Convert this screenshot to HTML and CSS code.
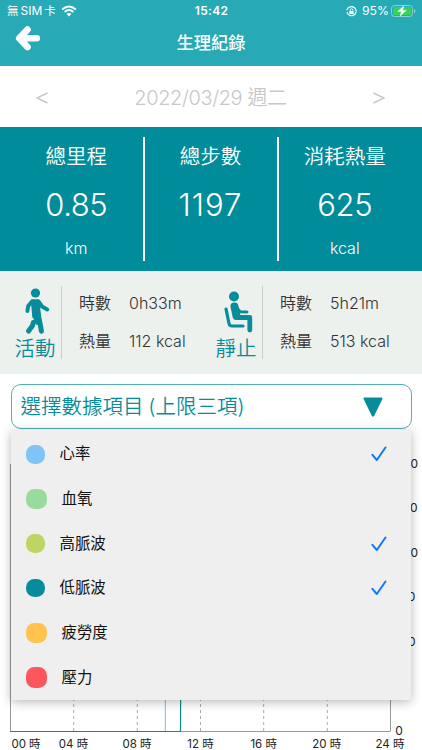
FILE: index.html
```html
<!DOCTYPE html>
<html lang="zh-Hant">
<head>
<meta charset="utf-8">
<meta name="viewport" content="width=device-width, initial-scale=1">
<title>生理紀錄</title>
<link rel="stylesheet" href="styles.css">
</head>
<body>
<header class="header">
  <div class="status">
    <div class="status-side">
      <span class="carrier">無<span class="sim">SIM</span>卡</span>
      <svg class="wifi" width="16" height="12" viewBox="0 0 16 12">
        <path d="M1.2 4.5Q8-1.6 14.8 4.5M3.6 7Q8 3 12.4 7" fill="none" stroke="#fff" stroke-width="2"/>
        <path d="M5.6 9Q8 7 10.4 9L8 11.5Z" fill="#fff"/>
      </svg>
    </div>
    <span class="clock">15:42</span>
    <div class="status-side status-right">
      <svg class="lock" width="11" height="11" viewBox="0 0 11 11">
        <path d="M2 2.2A4.6 4.6 0 1 1 1 6.2M.6 4.2L2.2 1.8" fill="none" stroke="#fff" stroke-width="1.1"/>
        <rect x="3.3" y="4.9" width="4.4" height="3.2" rx=".5" fill="#fff"/>
        <path d="M4.2 5V4A1.3 1.3 0 0 1 6.8 4V5" fill="none" stroke="#fff" stroke-width=".8"/>
      </svg>
      <span class="percent">95%</span>
      <svg class="battery" width="25" height="12" viewBox="0 0 25 12">
        <rect x=".5" y=".5" width="21" height="11" rx="3" fill="none" stroke="#8dd0d6"/>
        <rect x="2" y="2" width="18" height="8" rx="1.6" fill="#35d35b"/>
        <path d="M23 4v4q1.5-.6 1.5-2T23 4Z" fill="#8dd0d6"/>
        <path d="M13 .4L6.2 6.7H10.1L8.8 11.6L15.8 5.3H11.9Z" fill="#fff"/>
      </svg>
    </div>
  </div>
  <div class="titlebar">
    <svg class="back" width="26" height="26" viewBox="0 0 26 26">
      <path d="M12.5 4.6L4.2 13.2L12.5 22M5 13.2H21.8" fill="none" stroke="#fff" stroke-width="6.6" stroke-linecap="round" stroke-linejoin="round"/>
    </svg>
    <h1 class="title">生理紀錄</h1>
  </div>
</header>

<nav class="date">
  <svg class="chev" width="12" height="12" viewBox="0 0 12 12"><path d="M11.5 1L1 6L11.5 11" fill="none" stroke="#c8c8c8" stroke-width="1.5"/></svg>
  <span class="day">2022/03/29 週二</span>
  <svg class="chev" width="12" height="12" viewBox="0 0 12 12"><path d="M.5 1L11 6L.5 11" fill="none" stroke="#c8c8c8" stroke-width="1.5"/></svg>
</nav>

<section class="totals">
  <div class="total"><span class="total-name">總里程</span><span class="total-value">0.85</span><span class="total-unit">km</span></div>
  <div class="total"><span class="total-name">總步數</span><span class="total-value steps">1197</span></div>
  <div class="total"><span class="total-name">消耗熱量</span><span class="total-value">625</span><span class="total-unit">kcal</span></div>
</section>

<section class="states">
  <div class="state">
    <div class="pose">
      <svg width="26" height="48" viewBox="0 0 26 48" fill="none" stroke="#078c99" stroke-linecap="round" stroke-linejoin="round">
        <circle cx="11.5" cy="5" r="4.6" fill="#078c99" stroke="none"/>
        <path d="M8.5 13H13.5L15.5 28L10 28.5Z" fill="#078c99" stroke-width="3.4"/>
        <path d="M8 13.5L4.2 18L3.4 23M14.5 13.5L18 18.5L23.2 21.5" stroke-width="4"/>
        <path d="M14.5 28L16 35L17.4 43.2M9.3 34.5L8.6 37.5L4.6 43" stroke-width="5"/>
        <path d="M10.5 28L13.5 35" stroke-width="4"/>
      </svg>
      <span class="pose-name">活動</span>
    </div>
    <dl class="facts"><dt>時數</dt><dd>0h33m</dd><dt>熱量</dt><dd>112 kcal</dd></dl>
  </div>
  <div class="state">
    <div class="pose">
      <svg width="30" height="48" viewBox="0 0 30 48" fill="none" stroke="#078c99" stroke-linecap="round" stroke-linejoin="round">
        <circle cx="11" cy="8.5" r="5" fill="#078c99" stroke="none"/>
        <path d="M11.5 18.5L13.5 28" stroke-width="8"/>
        <path d="M14 29.5H26.8V42" stroke-width="4.8"/>
        <path d="M14 20L17 23.7L24 24" stroke-width="3"/>
        <path d="M3 21L6 35.5Q6.5 38 9 38H20" stroke-width="3.2"/>
      </svg>
      <span class="pose-name pose-wide">靜止</span>
    </div>
    <dl class="facts"><dt>時數</dt><dd>5h21m</dd><dt>熱量</dt><dd>513 kcal</dd></dl>
  </div>
</section>

<main class="data">
  <div class="select">
    <span class="select-text">選擇數據項目 <span class="limit">(上限三項)</span></span>
    <svg width="20" height="20" viewBox="0 0 20 20"><path d="M1.5 1.5H18.5L10.2 18.5H9.8Z" fill="#078c99" stroke="#078c99" stroke-width="2" stroke-linejoin="round"/></svg>
  </div>
  <svg class="chart" width="422" height="322" viewBox="0 429 422 322">
    <g stroke="#aaa" stroke-dasharray="3 3">
      <path d="M73.7 464V731M137.3 464V731M200.5 464V731M263.7 464V731M327.3 464V731"/>
    </g>
    <path d="M10.5 464V731M390.5 464V731M181 731.5H390.5" fill="none" stroke="#999"/>
    <path d="M165.3 464V731" stroke="#7fb9e8"/>
    <path d="M10 731.5H180.5L181.5 464" fill="none" stroke="#078c88" stroke-width="1.2"/>
    <g class="axis">
      <text x="395.5" y="467.5">300</text>
      <text x="395.5" y="512">250</text>
      <text x="395.5" y="556.5">200</text>
      <text x="395.5" y="601">150</text>
      <text x="395.5" y="645.5">100</text>
      <text x="395.5" y="690">50</text>
      <text x="395.3" y="735">0</text>
    </g>
    <g class="axis hours">
      <text x="26" y="748">00 時</text>
      <text x="73.5" y="748">04 時</text>
      <text x="137" y="748">08 時</text>
      <text x="200.5" y="748">12 時</text>
      <text x="263.7" y="748">16 時</text>
      <text x="326.7" y="748">20 時</text>
      <text x="390" y="748">24 時</text>
    </g>
  </svg>
  <ul class="menu">
    <li class="item on"><i class="dot blue"></i><span>心率</span><svg class="check" width="16" height="16" viewBox="0 0 16 16"><path d="M1.4 8.8L5.8 14L14.5 1.5"/></svg></li>
    <li class="item"><i class="dot green"></i><span>血氧</span></li>
    <li class="item on"><i class="dot lime"></i><span>高脈波</span><svg class="check" width="16" height="16" viewBox="0 0 16 16"><path d="M1.4 8.8L5.8 14L14.5 1.5"/></svg></li>
    <li class="item on"><i class="dot teal"></i><span>低脈波</span><svg class="check" width="16" height="16" viewBox="0 0 16 16"><path d="M1.4 8.8L5.8 14L14.5 1.5"/></svg></li>
    <li class="item"><i class="dot amber"></i><span>疲勞度</span></li>
    <li class="item"><i class="dot red"></i><span>壓力</span></li>
  </ul>
</main>
</body>
</html>
```

FILE: styles.css
```css
* { box-sizing: border-box; }

body {
  margin: 0;
  width: 422px;
  height: 750px;
  overflow: hidden;
  background: #fff;
  font-family: Inter, "Noto Sans CJK TC", sans-serif;
}

svg { display: block; flex: none; }

.header { height: 66px; background: #27aab5; color: #fff; }

.status {
  display: grid;
  grid-template-columns: 1fr auto 1fr;
  align-items: center;
  height: 22px;
  padding: 0 6px 0 7px;
  font-size: 12px;
  line-height: 22px;
}
.status-side { display: flex; align-items: center; gap: 5px; }
.status-right { justify-content: flex-end; }
.carrier { font-size: 11.5px; }
.sim { margin: 0 2px; font-size: 12px; }
.clock { font-weight: 600; font-size: 12px; letter-spacing: 0.3px; }
.percent { font-size: 12.2px; }
.battery { margin-left: -3px; }

.titlebar {
  display: grid;
  grid-template-columns: 26px 1fr 26px;
  height: 44px;
  padding: 3px 15px 0;
}
.title { margin: 0; font-size: 17.3px; font-weight: 500; line-height: 36px; text-align: center; }

.date {
  display: flex;
  justify-content: space-between;
  align-items: center;
  height: 61px;
  padding: 2px 37px 0 36px;
  color: #c8c8c8;
}
.day { font-size: 20px; font-weight: 350; letter-spacing: -0.4px; line-height: 28px; white-space: nowrap; }

.totals {
  display: grid;
  grid-template-columns: 144.5px 134px 1fr;
  height: 144px;
  padding: 10px 0;
  background: #008c9a;
  color: #fff;
}
.total {
  display: flex;
  flex-direction: column;
  align-items: center;
  padding-left: 10px;
  border-right: 2px solid #fff;
}
.total:nth-child(2) { padding-left: 0; }
.total:last-child { padding: 0 11px 0 0; border: 0; }
.total-name { margin-top: 4px; font-size: 20.5px; font-weight: 350; line-height: 32px; }
.total-value { margin-top: 12px; font-size: 31px; font-weight: 350; letter-spacing: -0.4px; line-height: 40px; }
.steps { letter-spacing: 1px; }
.total-unit { margin-top: 12px; font-size: 16px; font-weight: 350; line-height: 22px; }

.states {
  display: grid;
  grid-template-columns: 201px 1fr;
  height: 103px;
  padding: 15px 0 0 11px;
  background: #edf1ee;
}
.state { display: flex; height: 73px; }
.pose {
  display: flex;
  flex-direction: column;
  align-items: center;
  width: 51px;
  padding-right: 2px;
  border-right: 1px solid #c9cdcc;
}
.pose svg { margin: 2px 0 0 4px; }
.pose-name { margin-top: -2px; color: #078c99; font-size: 20.5px; font-weight: 350; line-height: 30px; }
.facts {
  display: grid;
  grid-template-columns: 50px auto;
  grid-auto-rows: 38px;
  margin: 0 0 0 17px;
  color: #333;
  font-size: 16px;
  font-weight: 350;
  line-height: 34px;
}
.facts dt, .facts dd { margin: 0; white-space: nowrap; }

.data { position: relative; padding-top: 10px; }
.select {
  display: flex;
  justify-content: space-between;
  align-items: center;
  width: 401px;
  height: 45px;
  margin-left: 10.5px;
  padding: 0 28px 0 9px;
  border: 1.5px solid #4fb0b7;
  border-radius: 10px;
  color: #078c99;
}
.select-text { font-size: 20.5px; font-weight: 350; line-height: 40px; white-space: nowrap; }
.limit { margin-left: -1px; }

.axis { fill: #222; font-size: 12px; }
.hours { font-size: 11.5px; text-anchor: middle; }

.menu {
  position: absolute;
  top: 56px;
  left: 11px;
  width: 400px;
  height: 270px;
  margin: 0;
  padding: 2px 24px 0 15px;
  background: #efefef;
  box-shadow: 0 2px 10px rgba(0, 0, 0, 0.28);
  list-style: none;
}
.item {
  display: flex;
  align-items: center;
  gap: 15px;
  height: 44.65px;
  color: #111;
  font-size: 15.4px;
  line-height: 24px;
}
.dot { flex: none; width: 20.5px; height: 20.5px; border-radius: 8.5px; }
.on .dot { width: 18.5px; height: 18.5px; }
.check { margin-left: auto; fill: none; stroke: #1678f2; stroke-width: 2; stroke-linecap: round; stroke-linejoin: round; }

.blue { background: #7fc4f5; }
.green { background: #98dc9d; }
.lime { background: #bfd562; }
.teal { background: #078c99; }
.amber { background: #ffc44f; }
.red { background: #fb575c; }
```
